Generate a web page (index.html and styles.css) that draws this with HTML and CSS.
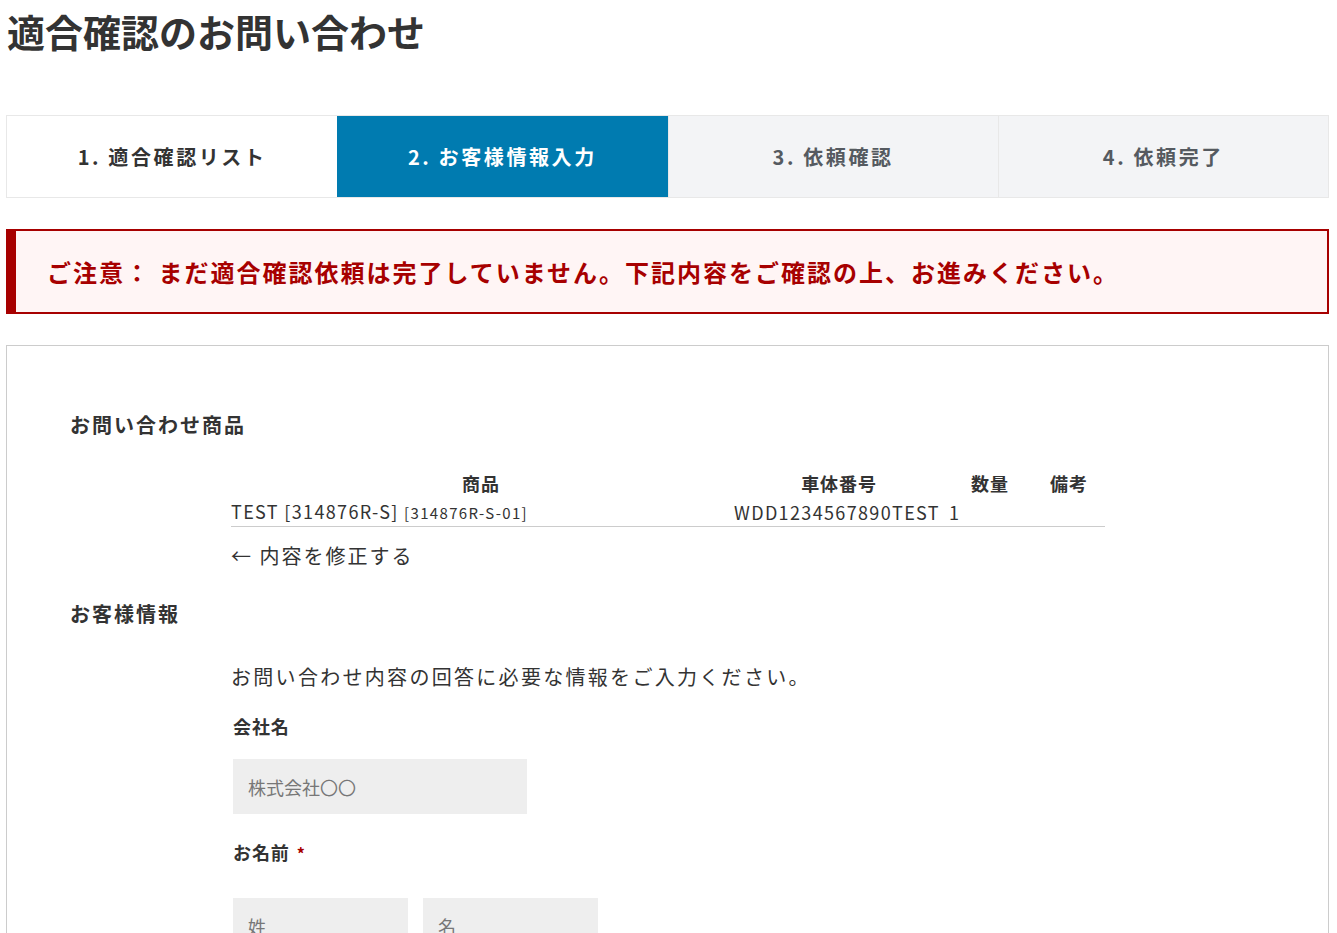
FILE: index.html
```html
<!DOCTYPE html>
<html lang="ja">

<head>
  <meta charset="UTF-8">
  <title>適合確認のお問い合わせ</title>
  <meta name="viewport" content="width=device-width, initial-scale=1.0">
  <link rel="stylesheet" href="styles.css">
</head>

<body>
  <div class="page">
    <h1 class="page-title">適合確認のお問い合わせ</h1>

    <ol class="steps">
      <li class="step done">1. 適合確認リスト</li>
      <li class="step current">2. お客様情報入力</li>
      <li class="step">3. 依頼確認</li>
      <li class="step">4. 依頼完了</li>
    </ol>

    <div class="alert">ご注意： まだ適合確認依頼は完了していません。下記内容をご確認の上、お進みください。</div>

    <div class="panel">
      <h2 class="panel-title">お問い合わせ商品</h2>
      <div class="panel-body">
        <table class="items">
          <thead>
            <tr>
              <th class="col-name">商品</th>
              <th class="col-vin">車体番号</th>
              <th class="col-qty">数量</th>
              <th class="col-note">備考</th>
            </tr>
          </thead>
          <tbody>
            <tr>
              <td>TEST [314876R-S] <small>[314876R-S-01]</small></td>
              <td>WDD1234567890TEST</td>
              <td>1</td>
              <td></td>
            </tr>
          </tbody>
        </table>
        <a class="back-link" href="#">← 内容を修正する</a>
      </div>

      <h2 class="panel-title second">お客様情報</h2>
      <div class="panel-body">
        <p class="lead">お問い合わせ内容の回答に必要な情報をご入力ください。</p>

        <div class="field">
          <label class="field-label">会社名</label>
          <input class="input wide" type="text" placeholder="株式会社〇〇">
        </div>

        <div class="field">
          <label class="field-label">お名前 <span class="req">*</span></label>
          <div class="name-row">
            <input class="input half" type="text" placeholder="姓">
            <input class="input half" type="text" placeholder="名">
          </div>
        </div>
      </div>
    </div>
  </div>
</body>

</html>
```

FILE: styles.css
```css
body {
  margin: 0;
  background: #fff;
  color: #333;
  font-family: "Noto Sans CJK JP", "Noto Sans", sans-serif;
}

.page {
  padding: 7px 8px 40px 6px;
}

.page-title {
  margin: 0 0 0 1px;
  font-size: 38px;
  line-height: 48px;
  font-weight: 700;
  color: #333;
}

/* ステップ */
.steps {
  list-style: none;
  margin: 60px 0 0;
  padding: 0;
  display: grid;
  grid-template-columns: repeat(4, 1fr);
  border: 1px solid #e8e8e8;
}

.step {
  height: 81px;
  display: flex;
  justify-content: center;
  align-items: center;
  font-size: 20px;
  font-weight: 700;
  letter-spacing: 0.13em;
  background: #f3f4f6;
  color: #555a60;
}

.step + .step {
  border-left: 1px solid #e8e8e8;
}

.step.done {
  background: #fff;
  color: #333;
}

.step.current {
  background: #007bb0;
  color: #fff;
  border-left: none;
}

/* 注意 */
.alert {
  margin-top: 31px;
  height: 81px;
  display: flex;
  align-items: center;
  padding-left: 31px;
  border: 2px solid #a70000;
  border-left-width: 10px;
  background: #fff5f5;
  color: #a70000;
  font-size: 24px;
  font-weight: 700;
  letter-spacing: 2px;
  white-space: pre;
}

/* パネル */
.panel {
  margin-top: 31px;
  border: 1px solid #ccc;
  padding: 64px 63px 0;
}

.panel-title {
  margin: 0;
  font-size: 20px;
  line-height: 30px;
  font-weight: 700;
  letter-spacing: 0.1em;
}

.panel-title.second {
  margin-top: 28px;
}

.panel-body {
  margin-left: 161px;
}

.items {
  margin-top: 29px;
  width: 874px;
  border-collapse: collapse;
  font-size: 18px;
  letter-spacing: 0.05em;
}

.items th {
  height: 29px;
  padding: 0;
  font-weight: 700;
  text-align: center;
  line-height: 29px;
}

.items td {
  height: 27px;
  padding: 0;
  line-height: 27px;
  border-bottom: 1px solid #ccc;
  vertical-align: middle;
  letter-spacing: 0.075em;
}

.items td:nth-child(2) {
  padding-left: 3px;
}

.items td:nth-child(3) {
  padding-left: 2px;
}

.items small {
  font-size: 15px;
}

.col-name {
  width: 500px;
}

.col-vin {
  width: 216px;
}

.col-qty {
  width: 86px;
}

.back-link {
  display: block;
  margin-top: 14px;
  font-size: 20px;
  line-height: 30px;
  letter-spacing: 0.1em;
  color: #333;
  text-decoration: none;
}

.lead {
  margin: 33px 0 0;
  font-size: 20px;
  line-height: 30px;
  letter-spacing: 2.3px;
}

.field {
  margin-top: 20px;
  padding-left: 2px;
}

.field + .field {
  margin-top: 24px;
}

.field-label {
  display: block;
  font-size: 18px;
  line-height: 28px;
  font-weight: 700;
  letter-spacing: 0.05em;
}

.req {
  color: #a70000;
  font-size: 16px;
  margin-left: 2px;
}

.input {
  display: block;
  box-sizing: border-box;
  height: 55px;
  margin-top: 19px;
  padding: 0 15px;
  border: none;
  background: #eee;
  font-family: inherit;
  font-size: 18px;
  color: #333;
}

.input::placeholder {
  color: #777;
}

.input.wide {
  width: 294px;
}

.name-row {
  display: flex;
  gap: 15px;
  margin-top: 31px;
}

.name-row .input {
  margin-top: 0;
}

.input.half {
  width: 175px;
}
```
